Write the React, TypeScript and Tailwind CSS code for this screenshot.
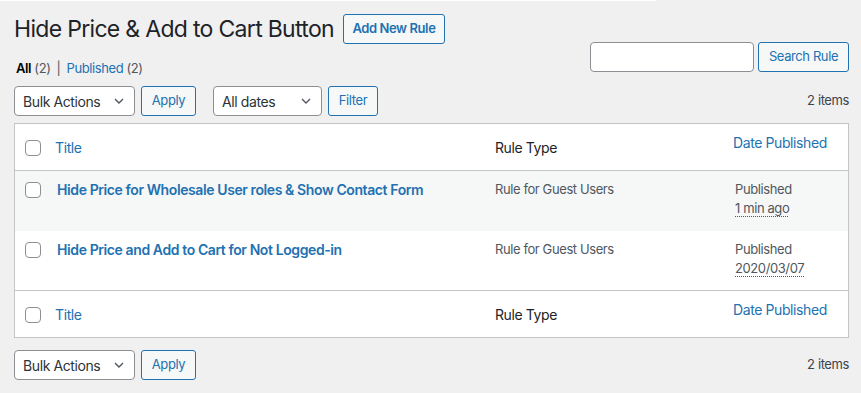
import React from "react";

const font = { fontFamily: 'Inter, "Noto Sans", sans-serif' };

function Chevron() {
  return (
    <svg width="12" height="8" viewBox="0 0 12 8" className="shrink-0">
      <polyline points="2,2 6,6 10,2" fill="none" stroke="#50575e" strokeWidth="1.4" />
    </svg>
  );
}

function Select({ label, w }: { label: string; w: string }) {
  return (
    <div className={`flex h-[30px] items-center justify-between rounded-[4px] border border-[#8c8f94] bg-white pl-[8px] pr-[9px] text-[14px] text-[#2c3338] ${w}`}>
      <span>{label}</span>
      <Chevron />
    </div>
  );
}

function Btn({ label, w, bold }: { label: string; w: string; bold?: boolean }) {
  return (
    <div className={`flex h-[30px] items-center justify-center rounded-[3px] border border-[#2271b1] bg-[#f6f7f7] text-[13px] text-[#2271b1] ${bold ? "font-semibold" : ""} ${w}`}>
      {label}
    </div>
  );
}

function Check() {
  return <div className="h-[16px] w-[16px] rounded-[4px] border border-[#8c8f94] bg-white" />;
}

function HeadRow({ top }: { top?: boolean }) {
  return (
    <div className={`flex h-[47px] items-stretch bg-white ${top ? "border-b" : "border-t"} border-[#c3c4c7]`}>
      <div className="flex w-[40px] items-center pl-[10px] pt-[2px]">
        <Check />
      </div>
      <div className="flex w-[440px] items-center pl-[0px] pt-[1px] text-[14px] text-[#2271b1]">Title</div>
      <div className="flex w-[238px] items-center pl-[0px] pt-[1px] text-[14px] text-[#1d2327]">Rule Type</div>
      <div className="flex flex-1 items-start pl-[0px] pt-[8px] text-[14px] text-[#2271b1]">Date Published</div>
    </div>
  );
}

function Row({ title, date, striped, h }: { title: string; date: string; striped?: boolean; h: string }) {
  return (
    <div className={`flex items-start ${h} ${striped ? "bg-[#f6f7f7]" : "bg-white"}`}>
      <div className="flex w-[40px] pl-[10px] pt-[11px]">
        <Check />
      </div>
      <div className="w-[440px] pl-[2px] pt-[9px] text-[14px] font-semibold leading-[19px] text-[#2271b1]">{title}</div>
      <div className="w-[238px] pt-[9px] text-[13px] leading-[18px] text-[#50575e]">Rule for Guest Users</div>
      <div className="flex-1 pl-[2px] pt-[9px] text-[13px] leading-[19px] text-[#50575e]">
        <div>Published</div>
        <div>
          <span className="underline decoration-dotted decoration-[1px] underline-offset-[3px]">{date}</span>
        </div>
      </div>
    </div>
  );
}

export default function App() {
  return (
    <div className="relative h-[393px] w-[861px] overflow-hidden bg-[#f0f0f1] tracking-[-0.025em]" style={font}>
      <div className="absolute left-0 top-0 h-px w-[656px] bg-white" />
      <div className="pl-[14px] pr-[12px] pt-[16px]">
        <div className="flex h-[26px] items-center">
          <h1 className="text-[23px] font-normal leading-none tracking-[-0.03em] text-[#1d2327]">Hide Price &amp; Add to Cart Button</h1>
          <div className="ml-[9px]">
            <Btn label="Add New Rule" w="w-[102px] h-[26px]" bold />
          </div>
        </div>
        <div className="flex h-[30px] justify-between">
          <div className="mt-[17px] pl-[2px] text-[13px] leading-[18px] text-[#50575e]">
            <span className="font-semibold text-black">All</span> (2)
            <span className="mx-[6px] text-[#50575e]">|</span>
            <span className="text-[#2271b1]">Published</span> (2)
          </div>
          <div className="flex gap-[4px]">
            <div className="h-[30px] w-[164px] rounded-[4px] border border-[#8c8f94] bg-white" />
            <Btn label="Search Rule" w="w-[91px]" />
          </div>
        </div>
        <div className="mt-[14px] flex h-[30px] items-center">
          <Select label="Bulk Actions" w="w-[121px]" />
          <div className="ml-[6px]">
            <Btn label="Apply" w="w-[55px]" />
          </div>
          <div className="ml-[17px]">
            <Select label="All dates" w="w-[109px]" />
          </div>
          <div className="ml-[6px]">
            <Btn label="Filter" w="w-[50px]" />
          </div>
          <div className="ml-auto text-[13px] text-[#3c434a]">2 items</div>
        </div>
        <div className="mt-[7px] w-[835px] border border-[#c3c4c7] bg-white">
          <HeadRow top />
          <Row title={"Hide Price for Wholesale User roles & Show Contact Form"} date="1 min ago" striped h="h-[60px]" />
          <Row title="Hide Price and Add to Cart for Not Logged-in" date="2020/03/07" h="h-[59px]" />
          <HeadRow />
        </div>
        <div className="mt-[12px] flex h-[30px] items-center">
          <Select label="Bulk Actions" w="w-[121px]" />
          <div className="ml-[6px]">
            <Btn label="Apply" w="w-[55px]" />
          </div>
          <div className="ml-auto text-[13px] text-[#3c434a]">2 items</div>
        </div>
      </div>
    </div>
  );
}
